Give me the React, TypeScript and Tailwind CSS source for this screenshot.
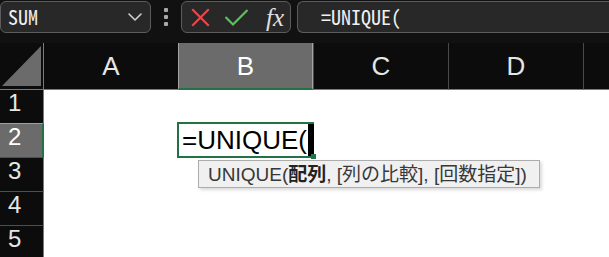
import React from "react";

const mono = { fontFamily: '"Noto Sans Mono CJK JP", "DejaVu Sans Mono", monospace' };

function Chevron() {
  return (
    <svg width="16" height="10" viewBox="0 0 16 10" fill="none">
      <path d="M2 2 L8 8 L14 2" stroke="#d0d0d0" strokeWidth="1.6" strokeLinecap="round" strokeLinejoin="round" />
    </svg>
  );
}

function ColHeader({ label, selected, first }: { label: string; selected?: boolean; first?: boolean }) {
  if (selected) {
    return (
      <div className="w-[135px] h-full flex items-center justify-center bg-[#6b6b6b] border-l border-r border-[#a5a5a5] border-b-2 border-b-[#217346] text-[26px] text-white leading-none">
        {label}
      </div>
    );
  }
  return (
    <div
      className={
        (first ? "w-[134px] " : "w-[135px] border-l border-[#4a4a4a] ") +
        "h-full flex items-center justify-center text-[26px] text-[#e6e6e6] leading-none border-b border-b-[#7a7a7a]"
      }
    >
      {label}
    </div>
  );
}

function RowHeader({ n, selected, h, top }: { n: number; selected?: boolean; h: string; top?: boolean }) {
  return (
    <div
      className={
        "w-[44px] shrink-0 pl-[8px] pt-[1px] text-[24px] leading-none " +
        h +
        (selected
          ? " bg-[#6b6b6b] border-r-2 border-r-[#217346] border-t border-t-[#a0a0a0] text-white"
          : " border-r border-r-[#7a7a7a] text-[#e6e6e6]") +
        (top ? " border-t border-t-[#4f4f4f]" : "")
      }
    >
      {n}
    </div>
  );
}

export default function App() {
  return (
    <div
      className="relative w-[609px] h-[257px] overflow-hidden bg-[#0c0c0c] flex flex-col"
      style={{ fontFamily: '"Liberation Sans", "Noto Sans CJK JP", sans-serif' }}
    >
      {/* Top bar */}
      <div className="h-[43px] shrink-0 flex items-start pt-[1px] bg-[#111111]">
        <div className="w-[151px] h-[32px] rounded-[6px] border border-[#5c5c5c] bg-[#282828] flex items-center pl-[7px] pr-[7px] justify-between">
          <span className="text-[20px] text-[#f0f0f0] leading-none" style={mono}>
            SUM
          </span>
          <Chevron />
        </div>
        <div className="w-[30px] h-[32px] flex flex-col items-center justify-center gap-[3px]">
          <div className="w-[4px] h-[4px] rounded-[1px] bg-[#a8a8a8]" />
          <div className="w-[4px] h-[4px] rounded-[1px] bg-[#a8a8a8]" />
          <div className="w-[4px] h-[4px] rounded-[1px] bg-[#a8a8a8]" />
        </div>
        <div className="w-[110px] h-[32px] rounded-[6px] border border-[#5c5c5c] bg-[#282828] flex items-center pl-[9px] gap-[14px]">
          <svg width="19" height="19" viewBox="0 0 19 19">
            <path d="M2 2 L17 17 M17 2 L2 17" stroke="#e5484d" strokeWidth="2.2" strokeLinecap="square" />
          </svg>
          <svg width="25" height="19" viewBox="0 0 25 19">
            <path d="M1.5 9 L9 16.5 L23.5 2" stroke="#5cc05c" strokeWidth="2.2" fill="none" />
          </svg>
          <span
            className="text-[25px] italic text-[#e0e0e0] leading-none ml-[3px]"
            style={{ fontFamily: '"Liberation Serif", serif' }}
          >
            fx
          </span>
        </div>
        <div className="w-[6px]" />
        <div className="flex-1 h-[32px] rounded-l-[6px] border border-r-0 border-[#5c5c5c] bg-[#282828] flex items-center pl-[23px]">
          <span className="text-[20px] text-[#f0f0f0] leading-none" style={mono}>
            =UNIQUE(
          </span>
        </div>
      </div>

      {/* Column headers */}
      <div className="h-[47px] shrink-0 flex">
        <div className="w-[44px] h-full border-r border-r-[#7a7a7a] border-b border-b-[#7a7a7a] flex items-end pl-[2px] pb-[3px]">
          <svg width="39" height="40" viewBox="0 0 39 40">
            <polygon points="0,40 39,0 39,40" fill="#6b6b6b" />
          </svg>
        </div>
        <ColHeader label="A" first />
        <ColHeader label="B" selected />
        <ColHeader label="C" />
        <ColHeader label="D" />
        <div className="flex-1 h-full border-l border-[#4a4a4a] border-b border-b-[#7a7a7a]" />
      </div>

      {/* Rows */}
      <div className="flex h-[33px]">
        <RowHeader n={1} h="h-[33px]" />
        <div className="flex-1 bg-white" />
      </div>
      <div className="flex h-[34px]">
        <RowHeader n={2} h="h-[34px]" selected />
        <div className="w-[134px] bg-white" />
        <div className="relative w-[135px] bg-white">
          <div className="absolute -left-[1px] -top-[1px] w-[137px] h-[36px] border-2 border-[#217346]" />
          <div className="absolute left-[4px] top-[2px] text-[26px] leading-[30px] text-black">=UNIQUE(</div>
          <div className="absolute left-[130px] top-[1px] w-[6px] h-[32px] bg-black" />
          <div className="absolute left-[133px] top-[31px] w-[5px] h-[5px] bg-[#217346]" />
        </div>
        <div className="flex-1 bg-white" />
      </div>
      <div className="flex h-[34px]">
        <RowHeader n={3} h="h-[34px]" top />
        <div className="flex-1 bg-white" />
      </div>
      <div className="flex h-[34px]">
        <RowHeader n={4} h="h-[34px]" top />
        <div className="flex-1 bg-white" />
      </div>
      <div className="flex flex-1">
        <RowHeader n={5} h="h-[34px]" top />
        <div className="flex-1 bg-white" />
      </div>

      {/* Tooltip */}
      <div className="absolute left-[198px] top-[160px] w-[342px] h-[28px] bg-[#f0f0f0] border border-[#acacac] shadow-[2px_2px_3px_rgba(0,0,0,0.15)] flex items-center pl-[9px] text-[19px] leading-none text-[#383838] whitespace-nowrap">
        <span>UNIQUE(</span>
        <span className="font-bold text-[#222]">配列</span>
        <span>, [列の比較], [回数指定])</span>
      </div>
    </div>
  );
}
